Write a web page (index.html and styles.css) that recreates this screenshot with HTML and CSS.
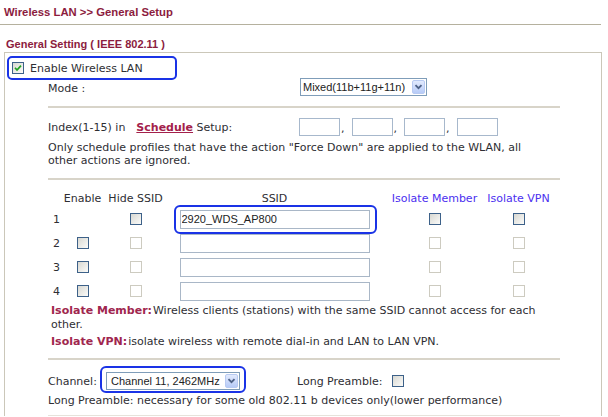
FILE: index.html
```html
<!DOCTYPE html>
<html lang="en">
<head>
    <meta charset="UTF-8">
    <meta name="viewport" content="width=device-width, initial-scale=1.0">
    <title>Wireless LAN &gt;&gt; General Setup</title>
    <link rel="stylesheet" href="styles.css">
</head>
<body>
    <div class="page-title">Wireless LAN &gt;&gt; General Setup</div>
    <div class="section-title">General Setting ( IEEE 802.11 )</div>

    <div class="box">
        <div class="enable-wlan">
            <span class="cb"><svg width="10" height="10" viewBox="0 0 10 10"><polyline points="2,4.8 4,7 8,2.6" fill="none" stroke="#21a121" stroke-width="1.7"/></svg></span>
            <span>Enable Wireless LAN</span>
        </div>

        <div class="inner">
            <div class="mode-row">
                <span class="mode-label">Mode :</span>
                <div class="select mode-select">
                    <span class="select-text">Mixed(11b+11g+11n)</span>
                    <span class="select-btn"><svg width="9" height="6" viewBox="0 0 9 6"><polyline points="1.5,1.2 4.5,4.2 7.5,1.2" fill="none" stroke="#4d6185" stroke-width="1.8"/></svg></span>
                </div>
            </div>

            <div class="schedule">
                <div class="index-row">
                    <span class="index-label">Index(1-15) in&nbsp; <a href="#" class="link">Schedule</a> Setup:</span>
                    <input type="text" class="idx"><span class="comma">,</span>
                    <input type="text" class="idx"><span class="comma">,</span>
                    <input type="text" class="idx"><span class="comma">,</span>
                    <input type="text" class="idx">
                </div>
                <p class="note">Only schedule profiles that have the action "Force Down" are applied to the WLAN, all other actions are ignored.</p>
            </div>

            <div class="ssid-table">
                <span></span>
                <span class="th">Enable</span>
                <span class="th">Hide SSID</span>
                <span class="th">SSID</span>
                <span class="th th-blue">Isolate Member</span>
                <span class="th th-blue">Isolate VPN</span>

                <span class="num">1</span>
                <span></span>
                <span class="cb"></span>
                <span class="hl"><input type="text" class="ssid" value="2920_WDS_AP800"></span>
                <span class="cb"></span>
                <span class="cb"></span>

                <span class="num">2</span>
                <span class="cb"></span>
                <span class="cb off"></span>
                <input type="text" class="ssid">
                <span class="cb off"></span>
                <span class="cb off"></span>

                <span class="num">3</span>
                <span class="cb"></span>
                <span class="cb off"></span>
                <input type="text" class="ssid">
                <span class="cb off"></span>
                <span class="cb off"></span>

                <span class="num">4</span>
                <span class="cb"></span>
                <span class="cb off"></span>
                <input type="text" class="ssid">
                <span class="cb off"></span>
                <span class="cb off"></span>
            </div>

            <div class="isolate-notes">
                <p><b class="term">Isolate Member:</b>Wireless clients (stations) with the same SSID cannot access for each other.</p>
                <p class="second"><b class="term">Isolate VPN:</b>isolate wireless with remote dial-in and LAN to LAN VPN.</p>
            </div>

            <div class="channel-row">
                <span class="channel-label">Channel:</span>
                <span class="hl hl-channel">
                    <div class="select channel-select">
                        <span class="select-text">Channel 11, 2462MHz</span>
                        <span class="select-btn"><svg width="9" height="6" viewBox="0 0 9 6"><polyline points="1.5,1.2 4.5,4.2 7.5,1.2" fill="none" stroke="#4d6185" stroke-width="1.8"/></svg></span>
                    </div>
                </span>
                <span class="preamble">Long Preamble:</span>
                <span class="cb"></span>
            </div>
            <p class="preamble-note">Long Preamble: necessary for some old 802.11 b devices only(lower performance)</p>
        </div>
    </div>
</body>
</html>
```

FILE: styles.css
```css
body {
    margin: 0;
    font-family: "DejaVu Sans", Verdana, sans-serif;
    font-size: 11px;
    color: #2e2e33;
    background: #fff;
    overflow: hidden;
}

/* headings */
.page-title {
    width: 597px;
    height: 24px;
    padding-left: 4px;
    border-bottom: 1px solid #b5b19e;
    font: bold 11.3px/24px "Liberation Sans", Arial, sans-serif;
    color: #8c1c3e;
}
.section-title {
    margin: 11px 0 0 6px;
    font: bold 11px/16px "Liberation Sans", Arial, sans-serif;
    color: #8c1c3e;
}

.box {
    margin-left: 4px;
    width: 596px;
    border: 1px solid #cbc7b9;
    border-bottom: 0;
}

.enable-wlan {
    display: flex;
    align-items: center;
    gap: 6px;
    width: 163px;
    height: 20px;
    margin: 3px 0 0 2px;
    padding-left: 3px;
    border: 2px solid #1a33e6;
    border-radius: 5px;
}

.inner {
    margin-left: 43px;
    width: 512px;
}

/* fake checkboxes */
.cb {
    display: inline-flex;
    align-items: center;
    justify-content: center;
    width: 12px;
    height: 12px;
    box-sizing: border-box;
    border: 1px solid #3d6189;
    background: linear-gradient(135deg, #d8d8d2, #fbfbf9);
}
.cb.off {
    border-color: #cdcbc0;
    background: #fff;
}

/* fake selects */
.select {
    display: flex;
    align-items: center;
    box-sizing: border-box;
    height: 18px;
    border: 1px solid #7f9db9;
    background: #fff;
    font: 11px "Liberation Sans", Arial, sans-serif;
    color: #222;
}
.select-text {
    flex: 1;
    white-space: nowrap;
    overflow: hidden;
}
.select-btn {
    display: flex;
    align-items: center;
    justify-content: center;
    width: 13px;
    height: 14px;
    margin-right: 1px;
    box-sizing: border-box;
    border: 1px solid #b8caf2;
    border-radius: 2px;
    background: linear-gradient(#e2eafd, #b7cbf7);
}

.mode-row {
    display: flex;
    height: 26px;
    border-bottom: 2px solid #d8d4c9;
}
.mode-label {
    width: 252px;
    line-height: 17px;
}
.mode-select {
    width: 127px;
    margin-top: -2px;
    padding-left: 2px;
}

.schedule {
    padding: 10px 0 11px;
    border-bottom: 2px solid #d8d4c9;
}
.index-row {
    display: flex;
    align-items: center;
    height: 18px;
}
.index-label {
    width: 251px;
    white-space: nowrap;
}
.link {
    color: #a3204b;
    font-weight: bold;
    margin-left: 4px;
}
.idx {
    width: 41px;
    height: 18px;
    box-sizing: border-box;
    margin: 0 1px 0 0;
    padding: 0;
    border: 1px solid #a7b8cc;
}
.comma {
    margin-right: 7px;
    align-self: flex-end;
    line-height: 14px;
}
.note {
    width: 500px;
    margin: 5px 0 0;
    line-height: 13px;
}

/* ssid table */
.ssid-table {
    display: grid;
    grid-template-columns: 14px 41px 65px 213px 107px 61px;
    grid-template-rows: 17px repeat(4, 24px);
    align-items: center;
    justify-items: center;
    padding-top: 10px;
}
.th {
    white-space: nowrap;
}
.th-blue {
    color: #4b2ff0;
}
.num {
    justify-self: start;
    padding-left: 5px;
}
.ssid {
    width: 190px;
    height: 19px;
    box-sizing: border-box;
    margin: 0;
    padding: 0 1px;
    border: 1px solid #a9b7c7;
    font: 11px "Liberation Sans", Arial, sans-serif;
    color: #222;
}

/* blue annotation outlines */
.hl {
    position: relative;
    display: inline-flex;
}
.hl::after {
    content: "";
    position: absolute;
    top: -5px;
    bottom: -5px;
    left: -6px;
    right: -7px;
    border: 2px solid #1a33e6;
    border-radius: 6px;
}
.hl-channel::after {
    top: -6px;
    bottom: -3px;
    right: -6px;
}

.isolate-notes {
    padding: 1px 3px 9px;
    border-bottom: 2px solid #d8d4c9;
}
.isolate-notes p {
    margin: 0;
    line-height: 14px;
}
.isolate-notes .second {
    margin-top: 3px;
}
.term {
    color: #a0264e;
    margin-right: 1px;
}

.channel-row {
    display: flex;
    align-items: center;
    padding-top: 12px;
    height: 18px;
}
.channel-label {
    width: 58px;
}
.channel-select {
    width: 134px;
    padding-left: 4px;
}
.preamble {
    margin: 0 9px 0 57px;
}
.preamble-note {
    margin: 4px 0 0;
    line-height: 14px;
    padding-bottom: 7px;
    border-bottom: 1px solid #e6e3db;
}
```
